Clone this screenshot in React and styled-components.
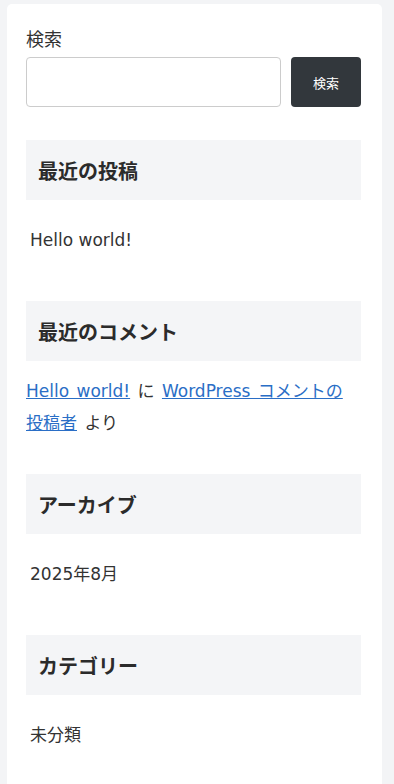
import React from "react";
import styled, { createGlobalStyle } from "styled-components";

const GlobalStyle = createGlobalStyle`
  body {
    margin: 0;
    background: #f3f4f6;
    font-family: "DejaVu Sans", "Noto Sans CJK JP", sans-serif;
    color: #333;
  }
`;

const Page = styled.div`
  padding: 4px 12px 0 7px;
`;

const Sidebar = styled.aside`
  background: #fff;
  border-radius: 5px;
  padding: 22px 21px 40px 19px;
`;

const SearchLabel = styled.label`
  display: block;
  font-family: "Noto Sans CJK JP", sans-serif;
  font-size: 18px;
  line-height: 24px;
  margin-bottom: 7px;
`;

const SearchRow = styled.form`
  display: flex;
  gap: 10px;
  margin-bottom: 33px;
`;

const SearchInput = styled.input`
  flex: 1;
  min-width: 0;
  height: 50px;
  box-sizing: border-box;
  border: 1px solid #ccc;
  border-radius: 4px;
  background: #fff;
`;

const SearchButton = styled.button`
  width: 70px;
  height: 50px;
  border: none;
  border-radius: 4px;
  background: #32373c;
  color: #fff;
  font-family: "Noto Sans CJK JP", sans-serif;
  font-size: 13px;
`;

const Widget = styled.section`
  margin-bottom: 35px;
`;

const WidgetTitle = styled.h2`
  margin: 0 0 14px;
  height: 60px;
  display: flex;
  align-items: center;
  padding: 0 12px;
  background: #f4f5f7;
  font-family: "Noto Sans CJK JP", sans-serif;
  font-size: 20px;
  font-weight: 700;
  color: #2b2b2b;
`;

const List = styled.ul`
  list-style: none;
  margin: 0;
  padding: 0;
`;

const Item = styled.li`
  padding: 10px 4px;
  font-size: 17px;
  line-height: 32px;
`;

const Comment = styled.p`
  margin: 0;
  font-size: 17px;
  line-height: 32px;
  word-spacing: 2px;
`;

const Link = styled.a`
  color: #2a6ec6;
  text-decoration: underline;
`;

// 投稿者 は一塊で改行させる
const NoBreak = styled.span`
  white-space: nowrap;
`;

const widgets = [
  { title: "最近の投稿", items: ["Hello world!"] },
  { title: "最近のコメント", comment: true },
  { title: "アーカイブ", items: ["2025年8月"] },
  { title: "カテゴリー", items: ["未分類"] },
];

export default function App() {
  return (
    <Page>
      <GlobalStyle />
      <Sidebar>
        <SearchLabel htmlFor="s">検索</SearchLabel>
        <SearchRow onSubmit={(e) => e.preventDefault()}>
          <SearchInput id="s" type="search" />
          <SearchButton type="submit">検索</SearchButton>
        </SearchRow>
        {widgets.map((w) => (
          <Widget key={w.title}>
            <WidgetTitle>{w.title}</WidgetTitle>
            {w.comment ? (
              <Comment>
                <Link href="#">Hello world!</Link> に{" "}
                <Link href="#">
                  WordPress コメントの<NoBreak>投稿者</NoBreak>
                </Link>{" "}
                より
              </Comment>
            ) : (
              <List>
                {w.items.map((it) => (
                  <Item key={it}>{it}</Item>
                ))}
              </List>
            )}
          </Widget>
        ))}
      </Sidebar>
    </Page>
  );
}
